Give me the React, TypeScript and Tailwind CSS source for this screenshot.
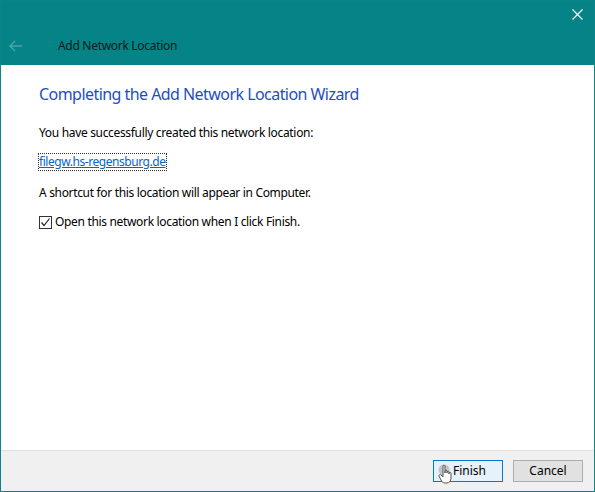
import React from 'react';

const font = { fontFamily: '"Noto Sans", "Open Sans", sans-serif' };

function BackArrow() {
  return (
    <svg width="14" height="12" viewBox="0 0 14 12" className="shrink-0">
      <path d="M6 1 L1 6 L6 11 M1 6 H13" fill="none" stroke="#4ea3a6" strokeWidth="1.4" />
    </svg>
  );
}

function CloseIcon() {
  return (
    <svg width="11" height="11" viewBox="0 0 11 11">
      <path d="M0.5 0.5 L10.5 10.5 M10.5 0.5 L0.5 10.5" stroke="#ffffff" strokeWidth="1.2" />
    </svg>
  );
}

function HandCursor() {
  return (
    <svg width="18" height="22" viewBox="0 0 18 22" className="absolute left-[3px] top-[2px]">
      <circle cx="7" cy="7" r="5.5" fill="#b9b9b9" opacity="0.8" />
      <path
        d="M6 3 C6 2 8 2 8 3 L8 10 L8 8 C8 7 10 7 10 8 L10 10 L10 9 C10 8 12 8 12 9 L12 11 L12 10 C12 9 14 9 14 10 L14 15 C14 18 12 20 10 20 L8 20 C6 20 5 19 4 17 L2 13 C1.5 12 3 11 4 12 L6 14 Z"
        fill="#ffffff"
        stroke="#555555"
        strokeWidth="1"
        strokeLinejoin="round"
      />
    </svg>
  );
}

export default function App() {
  return (
    <div className="w-[595px] h-[492px] flex flex-col border border-[#0b8487] bg-white text-[12px] text-black" style={font}>
      {/* Title bar */}
      <div className="relative h-[64px] bg-[#068387] flex flex-col justify-end">
        <div className="absolute right-[11px] top-[8px]">
          <CloseIcon />
        </div>
        <div className="flex items-center h-[24px] mb-[7px] pl-[8px]">
          <BackArrow />
          <span className="ml-[35px] text-[12px] tracking-[-0.3px] text-[#0c1b1c]">Add Network Location</span>
        </div>
      </div>

      {/* Content */}
      <div className="flex-1 bg-white pl-[38px] pt-[18px] tracking-[-0.33px]">
        <h1 className="text-[16px] leading-[22px] tracking-[-0.55px] text-[#1d4fbd] font-normal">
          Completing the Add Network Location Wizard
        </h1>
        <p className="mt-[20px] leading-[16px]">You have successfully created this network location:</p>
        <div className="mt-[13px] leading-[16px]">
          <span className="inline-block outline outline-1 outline-dotted outline-[#333] text-[#0066cc] underline tracking-[-0.45px]">
            filegw.hs-regensburg.de
          </span>
        </div>
        <p className="mt-[15px] leading-[16px]">A shortcut for this location will appear in Computer.</p>
        <label className="mt-[13px] flex items-center gap-[3px] leading-[16px]">
          <span className="w-[13px] h-[13px] border border-[#333] bg-white flex items-center justify-center">
            <svg width="11" height="11" viewBox="0 0 11 11">
              <path d="M1.5 5.5 L4 8.5 L9.5 1.5" fill="none" stroke="#222" strokeWidth="1.2" />
            </svg>
          </span>
          Open this network location when I click Finish.
        </label>
      </div>

      {/* Footer */}
      <div className="h-[41px] bg-[#f0f0f0] border-t border-[#dfdfdf] flex items-center justify-end gap-[10px] pr-[11px]">
        <div className="relative w-[70px] h-[22px] border border-[#0078d7] bg-[#e5f1fb] flex items-center justify-center pl-[3px]">
          Finish
          <HandCursor />
        </div>
        <div className="w-[70px] h-[22px] border border-[#adadad] bg-[#e1e1e1] flex items-center justify-center">
          Cancel
        </div>
      </div>
    </div>
  );
}
